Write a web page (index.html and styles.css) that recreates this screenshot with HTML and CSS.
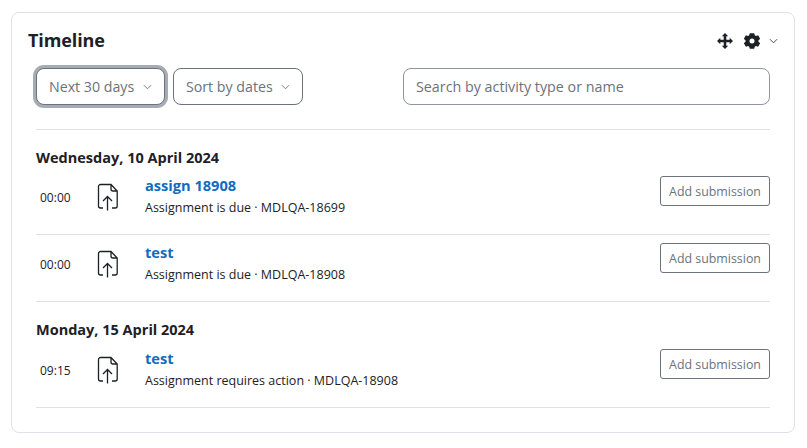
FILE: index.html
```html
<!DOCTYPE html>
<html lang="en">
<head>
<meta charset="utf-8">
<title>Timeline</title>
<link rel="stylesheet" href="styles.css">
</head>
<body>
<section class="card">
  <header class="card-head">
    <h2 class="card-title">Timeline</h2>
    <div class="card-tools">
      <svg class="tool-move" viewBox="0 0 16 16" width="16" height="16" aria-hidden="true"><path d="M8 0 11.200 3.300H9.300V6.700H12.700V4.800L16 8 12.700 11.200V9.300H9.300V12.700H11.200L8 16 4.800 12.700H6.700V9.300H3.300V11.200L0 8 3.300 4.800V6.700H6.700V3.300H4.800Z" fill="#1d2125"/></svg>
      <svg class="tool-gear" viewBox="0 0 16 16" width="16" height="16" aria-hidden="true"><path fill-rule="evenodd" d="M5.800.2h4.400l.6 2.100 1.100.6 2.200-.6 2 3.500-1.600 1.500v1.400l1.600 1.500-2 3.500-2.200-.6-1.100.6-.6 2.100H5.800l-.6-2.100-1.100-.6-2.200.6-2-3.500 1.600-1.500V7.300L-.1 5.800l2-3.500 2.200.6 1.100-.6ZM8 5.500a2.500 2.500 0 1 0 0 5 2.500 2.500 0 0 0 0-5Z" fill="#1d2125"/></svg>
      <svg class="chev" viewBox="0 0 10 6" width="9" height="6" aria-hidden="true"><path d="M1 1l4 4 4-4" fill="none" stroke="#343a40" stroke-width="1"/></svg>
    </div>
  </header>

  <div class="filters">
    <button class="pill pill-focus" type="button">Next 30 days
      <svg class="chev" viewBox="0 0 10 6" width="9" height="6" aria-hidden="true"><path d="M1 1l4 4 4-4" fill="none" stroke="#6a737b" stroke-width="1"/></svg>
    </button>
    <button class="pill pill-sort" type="button">Sort by dates
      <svg class="chev" viewBox="0 0 10 6" width="9" height="6" aria-hidden="true"><path d="M1 1l4 4 4-4" fill="none" stroke="#6a737b" stroke-width="1"/></svg>
    </button>
    <input class="search" type="text" placeholder="Search by activity type or name">
  </div>

  <div class="timeline">
    <h3 class="day">Wednesday, 10 April 2024</h3>
    <div class="event">
      <span class="time">00:00</span>
      <svg class="file" viewBox="0 0 24 32" width="24" height="32" aria-hidden="true"><use href="#file-up"/></svg>
      <div class="info">
        <a class="name" href="#">assign 18908</a>
        <p class="meta">Assignment is due · MDLQA-18699</p>
      </div>
      <button class="add" type="button">Add submission</button>
    </div>
    <div class="event">
      <span class="time">00:00</span>
      <svg class="file" viewBox="0 0 24 32" width="24" height="32" aria-hidden="true"><use href="#file-up"/></svg>
      <div class="info">
        <a class="name" href="#">test</a>
        <p class="meta">Assignment is due · MDLQA-18908</p>
      </div>
      <button class="add" type="button">Add submission</button>
    </div>
    <h3 class="day day-next">Monday, 15 April 2024</h3>
    <div class="event">
      <span class="time">09:15</span>
      <svg class="file" viewBox="0 0 24 32" width="24" height="32" aria-hidden="true"><use href="#file-up"/></svg>
      <div class="info">
        <a class="name" href="#">test</a>
        <p class="meta">Assignment requires action · MDLQA-18908</p>
      </div>
      <button class="add" type="button">Add submission</button>
    </div>
  </div>
</section>

<svg class="defs" width="0" height="0" aria-hidden="true">
  <symbol id="file-up" viewBox="0 0 24 32">
    <path d="M8 27H5.500a2 2 0 0 1-2-2V5.500a2 2 0 0 1 2-2H16l6.200 6.500V25a2 2 0 0 1-2 2H17M16 3.500V8a2 2 0 0 0 2 2h4.200" fill="none" stroke="#1d2125" stroke-width="1.300"/>
    <path d="M12.500 29.500V15.500M8 20l4.500-4.500L17 20" fill="none" stroke="#1d2125" stroke-width="1.300"/>
  </symbol>
</svg>
</body>
</html>
```

FILE: styles.css
```css
* { box-sizing: border-box; }
html, body { margin: 0; padding: 0; background: #fff; }
body {
  font-family: "Open Sans", "Noto Sans", "Liberation Sans", sans-serif;
  color: #1d2125;
  padding: 12px 12px 0 11px;
}
.card {
  height: 421px;
  border: 1px solid #dee2e6;
  border-radius: 8px;
  padding: 0 24px;
}
.card-head {
  display: flex;
  align-items: center;
  justify-content: space-between;
  height: 55px;
  margin-left: -8px;
}
.card-title {
  margin: 0 0 2px;
  font-size: 18px;
  font-weight: 700;
  letter-spacing: -0.1px;
}
.card-tools { display: flex; align-items: center; margin-right: -8px; }
.tool-move { margin-right: 11px; }
.tool-gear { margin-right: 9px; }
.filters {
  display: flex;
  align-items: stretch;
  height: 37px;
}
.pill, .search {
  border: 1px solid #8f959e;
  border-radius: 8px;
  background: #fff;
  font-family: inherit;
  font-size: 14.2px;
  color: #6a737b;
}
.pill {
  display: flex;
  align-items: center;
  justify-content: space-between;
  padding: 0 12px 0 12px;
  white-space: nowrap;
}
.pill-focus {
  width: 129px;
  margin-right: 8px;
  border-color: #6a737b;
  box-shadow: 0 0 0 3px #a5acb3;
}
.pill-sort { width: 130px; margin-right: 100px; border-color: #6a737b; }
.search { flex: 1; padding: 0 12px; outline: none; font-size: 14.3px; }
.search::placeholder { color: #6a737b; opacity: 1; }
.timeline { margin-top: 24px; border-top: 1px solid #dee2e6; }
.day {
  margin: 0;
  padding-top: 18px;
  font-size: 14.5px;
  line-height: 19px;
  font-weight: 700;
}
.event {
  display: flex;
  align-items: flex-start;
  padding: 8px 0 16px;
  border-bottom: 1px solid #dee2e6;
}
.day + .event { padding-top: 9px; }
.day-next + .event { padding-top: 10px; }
.time { align-self: center; width: 59px; padding-left: 4px; font-size: 12px; flex: none; }
.file { align-self: center; flex: none; margin-right: 26px; }
.info { flex: 1; min-width: 0; }
.name {
  display: block;
  margin-top: -1px;
  font-size: 14.6px;
  line-height: 20px;
  font-weight: 700;
  color: #0f6cbf;
  text-decoration: none;
}
.meta { margin: 4px 0 1px; font-size: 12.5px; line-height: 18px; }
.add {
  flex: none;
  width: 110px;
  height: 30px;
  border: 1px solid #6a737b;
  border-radius: 3px;
  background: #fff;
  font-family: inherit;
  font-size: 12.4px;
  color: #6a737b;
  padding: 0;
}
.defs { position: absolute; }
```
